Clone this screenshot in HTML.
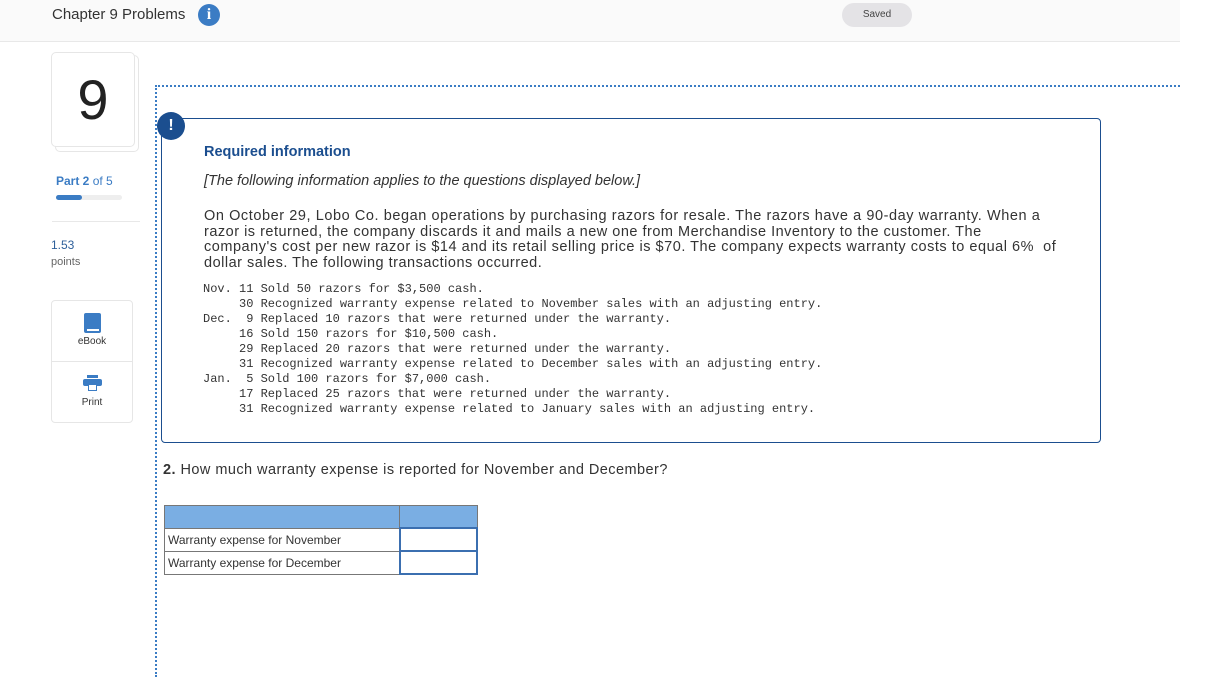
<!DOCTYPE html>
<html><head><meta charset="utf-8"><style>
body{margin:0;width:1216px;height:677px;background:#fff;font-family:"Liberation Sans",sans-serif;position:relative;overflow:hidden;color:#333}
.a{position:absolute}
.hdr{left:0;top:0;width:1180px;height:41px;background:#fafafa;border-bottom:1px solid #e8e8e8}
.mono{font-family:"Liberation Mono",monospace;font-size:12px;line-height:15px;white-space:pre;color:#333}
.p{font-size:14.5px;line-height:15.5px;color:#333;white-space:nowrap}
table{border-collapse:collapse}
td{border:1px solid #777;font-size:12px;padding:0 3px;height:21px}
</style></head><body>
<div class="a hdr"></div>
<div class="a" style="left:52px;top:6px;font-size:15px;color:#333">Chapter 9 Problems</div>
<div class="a" style="left:198px;top:4px;width:22px;height:22px;border-radius:50%;background:#3b7cc4;color:#fff;font:bold 16px 'Liberation Serif',serif;text-align:center;line-height:22px">i</div>
<div class="a" style="left:842px;top:3px;width:70px;height:24px;border-radius:12px;background:#e4e3e6;font-size:10px;text-align:center;line-height:24px;color:#444">Saved</div>

<div class="a" style="left:55px;top:55px;width:82px;height:95px;border:1px solid #e6e6e6;border-radius:5px"></div>
<div class="a" style="left:51px;top:52px;width:82px;height:93px;border:1px solid #e6e6e6;border-radius:5px;background:#fff;font-size:56px;text-align:center;line-height:93px;color:#222">9</div>
<div class="a" style="left:56px;top:174px;font-size:12px;color:#3b7cc4"><b>Part 2</b> of 5</div>
<div class="a" style="left:56px;top:195px;width:66px;height:5px;background:#eee;border-radius:3px"><div style="width:26px;height:5px;background:#3b7cc4;border-radius:3px"></div></div>
<div class="a" style="left:52px;top:221px;width:88px;border-top:1px solid #e8e8e8"></div>
<div class="a" style="left:51px;top:238px;font-size:12px;color:#2d5f9a">1.53</div>
<div class="a" style="left:51px;top:256px;font-size:11px;color:#666">points</div>
<div class="a" style="left:51px;top:300px;width:80px;height:121px;border:1px solid #e6e6e6;border-radius:4px"></div>
<div class="a" style="left:52px;top:361px;width:80px;border-top:1px solid #e6e6e6"></div>
<div class="a" style="left:84px;top:313px;width:17px;height:20px;background:#3b7cc4;border-radius:2px"><div style="position:absolute;left:3px;bottom:2px;width:12px;height:2px;background:#fff"></div></div>
<div class="a" style="left:52px;top:336px;width:80px;text-align:center;font-size:10px;color:#333">eBook</div>
<div class="a" style="left:83px;top:375px;width:19px;height:16px"><div style="position:absolute;left:4px;top:0;width:11px;height:3px;background:#3b7cc4"></div><div style="position:absolute;left:0;top:4px;width:19px;height:7px;background:#3b7cc4;border-radius:2px"></div><div style="position:absolute;left:5px;top:9px;width:9px;height:7px;background:#fff;border:1px solid #3b7cc4;box-sizing:border-box"></div></div>
<div class="a" style="left:52px;top:397px;width:80px;text-align:center;font-size:10px;color:#333">Print</div>

<div class="a" style="left:155px;top:85px;width:1025px;border-top:2px dotted #3b7cc4"></div>
<div class="a" style="left:155px;top:85px;height:592px;border-left:2px dotted #3b7cc4"></div>
<div class="a" style="left:161px;top:118px;width:938px;height:323px;border:1px solid #1b4e8f;border-radius:4px"></div>
<div class="a" style="left:157px;top:112px;width:28px;height:28px;border-radius:50%;background:#1b4e8f;color:#fff;font-weight:bold;font-size:16px;text-align:center;line-height:28px">!</div>
<div class="a" style="left:204px;top:144px;font-size:14.5px;font-weight:bold;color:#1b4e8f">Required information</div>
<div class="a" style="left:204px;top:173px;font-size:14.5px;font-style:italic;color:#333">[The following information applies to the questions displayed below.]</div>
<div class="a p" style="left:204px;top:209px"><span style="letter-spacing:0.57px">On October 29, Lobo Co. began operations by purchasing razors for resale. The razors have a 90-day warranty. When a</span><br><span style="letter-spacing:0.5px">razor is returned, the company discards it and mails a new one from Merchandise Inventory to the customer. The</span><br><span style="letter-spacing:0.52px">company's cost per new razor is $14 and its retail selling price is $70. The company expects warranty costs to equal 6% &nbsp;of</span><br><span style="letter-spacing:0.5px">dollar sales. The following transactions occurred.</span></div>
<div class="a mono" style="left:203px;top:282px">Nov. 11 Sold 50 razors for $3,500 cash.
     30 Recognized warranty expense related to November sales with an adjusting entry.
Dec.  9 Replaced 10 razors that were returned under the warranty.
     16 Sold 150 razors for $10,500 cash.
     29 Replaced 20 razors that were returned under the warranty.
     31 Recognized warranty expense related to December sales with an adjusting entry.
Jan.  5 Sold 100 razors for $7,000 cash.
     17 Replaced 25 razors that were returned under the warranty.
     31 Recognized warranty expense related to January sales with an adjusting entry.</div>
<div class="a" style="left:163px;top:462px;font-size:14.5px;color:#333;letter-spacing:0.45px"><b>2.</b> How much warranty expense is reported for November and December?</div>
<table class="a" style="left:164px;top:505px;width:314px">
<tr><td style="background:#7aaee3;width:228px;height:21px"></td><td style="background:#7aaee3"></td></tr>
<tr><td>Warranty expense for November</td><td style="border:2px solid #3b6fb0"></td></tr>
<tr><td>Warranty expense for December</td><td style="border:2px solid #3b6fb0"></td></tr>
</table>
</body></html>
